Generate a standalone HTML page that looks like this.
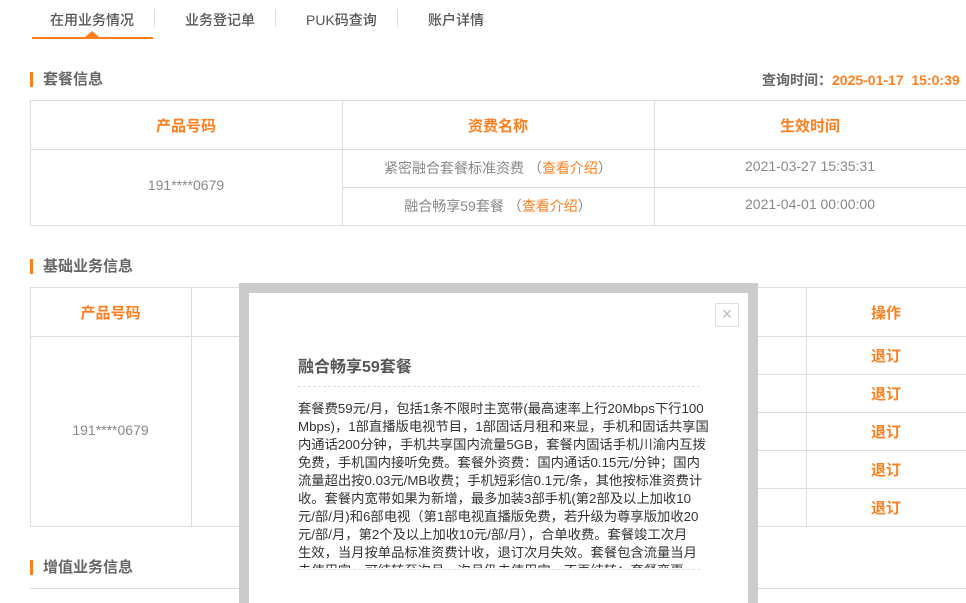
<!DOCTYPE html><html><head><meta charset="utf-8"><style>
*{margin:0;padding:0;box-sizing:border-box}
body{width:966px;height:590px;overflow:hidden;background:#fff;font-family:"Liberation Sans","Noto Sans CJK SC",sans-serif;color:#666;position:relative}
.a{position:absolute}
.tab{position:absolute;top:10px;font-size:14px;color:#555;font-weight:500}
.sep{position:absolute;top:9px;width:1px;height:18px;background:#ddd}
.h{position:absolute;left:30px;font-size:15px;font-weight:bold;color:#666;padding-left:10px;border-left:3px solid #ff7f1f;line-height:15px}
.o{color:#ff7f1f}
.hl{position:absolute;background:#ddd;height:1px}
.vl{position:absolute;background:#ddd;width:1px}
.c{position:absolute;text-align:center;font-size:14px;color:#888}
.th{font-size:15px;font-weight:bold;color:#ff7f1f}
.m{white-space:nowrap}
</style></head><body>
<div class="tab" style="left:50px">在用业务情况</div>
<div class="sep" style="left:154px"></div>
<div class="tab" style="left:185px">业务登记单</div>
<div class="sep" style="left:275px"></div>
<div class="tab" style="left:306px">PUK码查询</div>
<div class="sep" style="left:397px"></div>
<div class="tab" style="left:428px">账户详情</div>
<div class="a" style="left:32px;top:37px;width:121px;height:2px;background:#ff7f1f"></div>
<div class="a" style="left:85px;top:31px;width:0;height:0;border-left:7px solid transparent;border-right:7px solid transparent;border-bottom:6px solid #ff7f1f"></div>

<div class="h" style="top:72px">套餐信息</div>
<div class="a m" style="left:762px;top:70px;font-size:14px;font-weight:bold;color:#666">查询时间：<span class="o">2025-01-17&nbsp;&nbsp;15:0:39</span></div>

<div class="hl" style="left:30px;top:100px;width:936px"></div>
<div class="hl" style="left:30px;top:149px;width:936px"></div>
<div class="hl" style="left:342px;top:187px;width:624px"></div>
<div class="hl" style="left:30px;top:225px;width:936px"></div>
<div class="vl" style="left:30px;top:100px;height:126px"></div>
<div class="vl" style="left:342px;top:100px;height:126px"></div>
<div class="vl" style="left:654px;top:100px;height:126px"></div>
<div class="c th" style="left:30px;top:115px;width:312px">产品号码</div>
<div class="c th" style="left:342px;top:115px;width:312px">资费名称</div>
<div class="c th" style="left:654px;top:115px;width:312px">生效时间</div>
<div class="c" style="left:30px;top:177px;width:312px">191****0679</div>
<div class="c" style="left:342px;top:158px;width:312px">紧密融合套餐标准资费 （<span class="o">查看介绍</span>）</div>
<div class="c" style="left:342px;top:196px;width:312px">融合畅享59套餐 （<span class="o">查看介绍</span>）</div>
<div class="c" style="left:654px;top:158px;width:312px">2021-03-27 15:35:31</div>
<div class="c" style="left:654px;top:196px;width:312px">2021-04-01 00:00:00</div>

<div class="h" style="top:259px">基础业务信息</div>
<div class="hl" style="left:30px;top:287px;width:936px"></div>
<div class="hl" style="left:30px;top:336px;width:936px"></div>
<div class="hl" style="left:449px;top:374px;width:517px"></div>
<div class="hl" style="left:449px;top:412px;width:517px"></div>
<div class="hl" style="left:449px;top:450px;width:517px"></div>
<div class="hl" style="left:449px;top:488px;width:517px"></div>
<div class="hl" style="left:30px;top:526px;width:936px"></div>
<div class="vl" style="left:30px;top:287px;height:240px"></div>
<div class="vl" style="left:191px;top:287px;height:240px"></div>
<div class="vl" style="left:806px;top:287px;height:240px"></div>
<div class="c th" style="left:30px;top:302px;width:161px">产品号码</div>
<div class="c" style="left:30px;top:422px;width:161px">191****0679</div>
<div class="c th" style="left:806px;top:302px;width:160px">操作</div>
<div class="c th" style="left:806px;top:345px;width:160px">退订</div>
<div class="c th" style="left:806px;top:383px;width:160px">退订</div>
<div class="c th" style="left:806px;top:421px;width:160px">退订</div>
<div class="c th" style="left:806px;top:459px;width:160px">退订</div>
<div class="c th" style="left:806px;top:497px;width:160px">退订</div>

<div class="h" style="top:560px">增值业务信息</div>
<div class="hl" style="left:30px;top:588px;width:936px"></div>

<div class="a" style="left:239px;top:283px;width:519px;height:320px;background:#ccc"></div>
<div class="a" style="left:249px;top:293px;width:499px;height:310px;background:#fff"></div>
<div class="a" style="left:715px;top:303px;width:24px;height:24px;border:1px solid #ddd;border-radius:2px;color:#bbb;font-size:18px;line-height:21px;text-align:center">×</div>
<div class="a" style="left:298px;top:353px;font-size:16px;font-weight:bold;color:#555">融合畅享59套餐</div>
<div class="a" style="left:298px;top:386px;width:402px;border-top:1px dashed #ddd"></div>
<div class="a m" style="left:298px;top:400px;width:410px;height:168px;overflow:hidden;font-size:13.3px;line-height:18px;color:#333">套餐费59元/月，包括1条不限时主宽带(最高速率上行20Mbps下行100<br>Mbps)，1部直播版电视节目，1部固话月租和来显，手机和固话共享国<br>内通话200分钟，手机共享国内流量5GB，套餐内固话手机川渝内互拨<br>免费，手机国内接听免费。套餐外资费：国内通话0.15元/分钟；国内<br>流量超出按0.03元/MB收费；手机短彩信0.1元/条，其他按标准资费计<br>收。套餐内宽带如果为新增，最多加装3部手机(第2部及以上加收10<br>元/部/月)和6部电视（第1部电视直播版免费，若升级为尊享版加收20<br>元/部/月，第2个及以上加收10元/部/月），合单收费。套餐竣工次月<br>生效，当月按单品标准资费计收，退订次月失效。套餐包含流量当月<br>未使用完，可结转至次月，次月仍未使用完，不再结转；套餐变更</div>
<div class="a" style="left:298px;top:569px;width:402px;border-top:1px dashed #ddd"></div>
</body></html>
